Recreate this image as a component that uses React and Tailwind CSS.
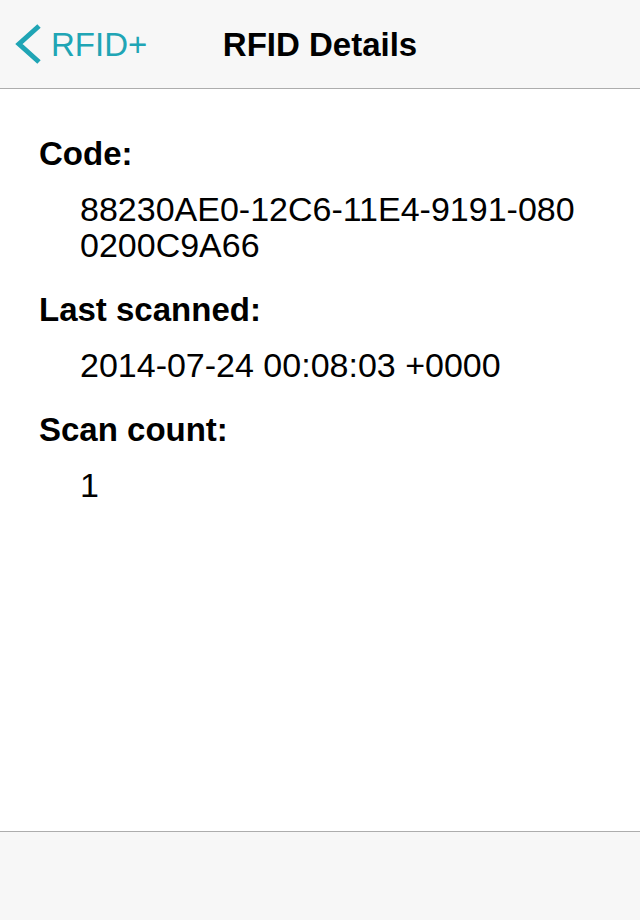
import React from 'react';

const font = { fontFamily: '"Liberation Sans", Arial, sans-serif' };

function Field({ label, value, first }) {
  return (
    <div className={first ? '' : 'mt-[29px]'}>
      <div className="pl-[39px] text-[33px] leading-[36px] font-bold text-black">{label}</div>
      <div className="mt-[19px] pl-[80px]">
        <div className="w-[510px] break-all text-[34px] leading-[36px] text-black">{value}</div>
      </div>
    </div>
  );
}

export default function App() {
  return (
    <div className="flex flex-col h-[920px] w-[640px] bg-white" style={font}>
      {/* Barra de navegação */}
      <header className="grid grid-cols-[1fr_auto_1fr] items-center h-[89px] bg-[#f7f7f7] border-b border-[#adadad]">
        <div className="flex items-center pl-[15px] text-[#20a5b5]">
          <svg width="26" height="42" viewBox="0 0 26 42" fill="none">
            <polyline points="24,3 4,21 24,39" stroke="#20a5b5" strokeWidth="5" strokeLinejoin="miter" />
          </svg>
          <span className="ml-[10px] text-[33px] leading-none">RFID+</span>
        </div>
        <h1 className="text-[33px] font-bold leading-none text-black">RFID Details</h1>
        <div />
      </header>

      {/* Conteúdo */}
      <main className="flex-1 pt-[47px]">
        <Field first label="Code:" value="88230AE0-12C6-11E4-9191-0800200C9A66" />
        <Field label="Last scanned:" value="2014-07-24 00:08:03 +0000" />
        <Field label="Scan count:" value="1" />
      </main>

      {/* Barra inferior */}
      <footer className="h-[89px] bg-[#f7f7f7] border-t border-[#adadad]" />
    </div>
  );
}
